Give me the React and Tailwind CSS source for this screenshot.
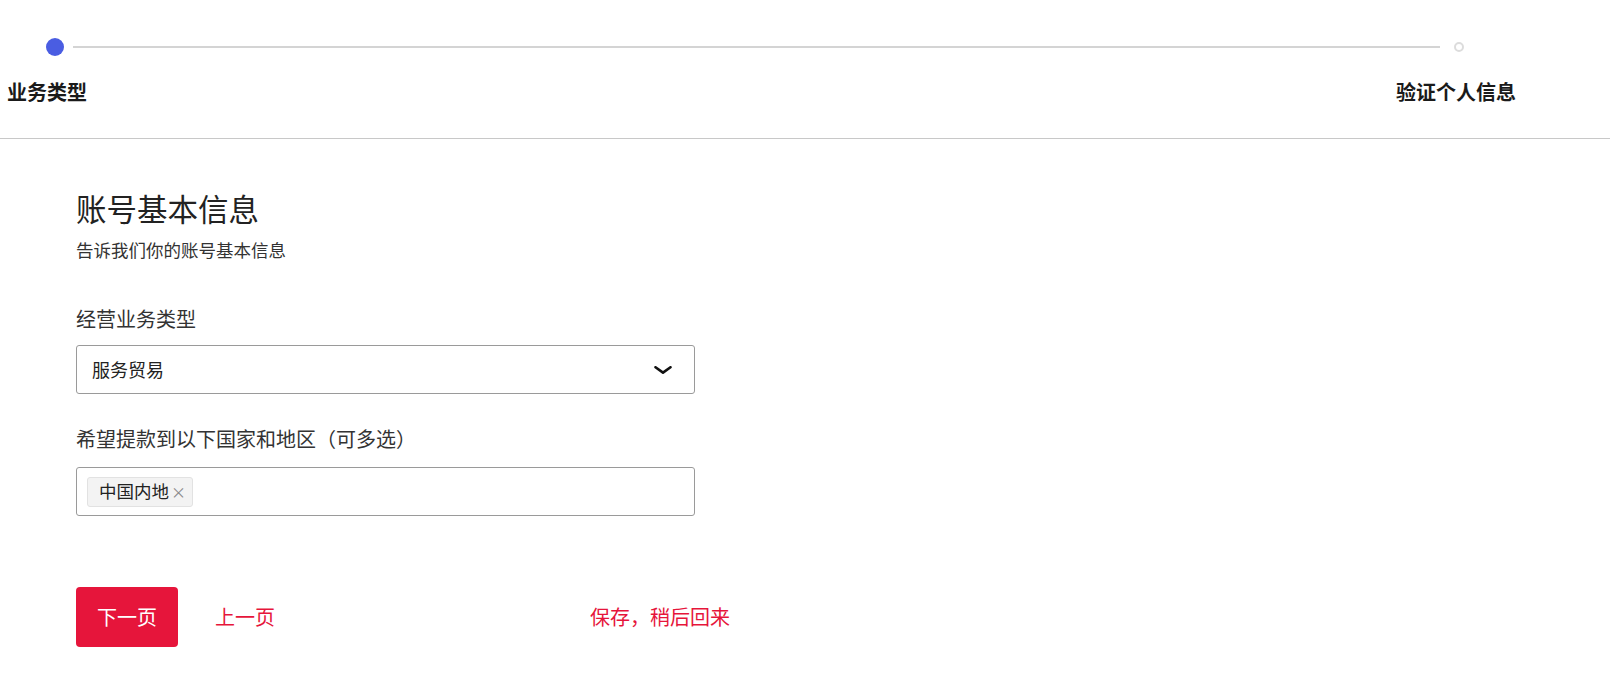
import React from "react";

export default function App() {
  const steps = ["业务类型", "验证个人信息"];

  return (
    <div className="min-h-screen bg-white text-[#222] font-['Noto_Sans_CJK_SC','Noto_Sans',sans-serif]">
      {/* Stepper */}
      <div className="h-[139px] border-b border-[#c8c8c8]">
        <div className="flex items-center pl-[46px] pr-[146px] pt-[38px]">
          <div className="w-[18px] h-[18px] rounded-full bg-[#4a5de2]" />
          <div className="flex-1 h-[2px] bg-[#d4d4d4] ml-[9px] mr-[14px]" />
          <div className="w-[10px] h-[10px] rounded-full border-2 border-[#dcdcdc]" />
        </div>
        <div className="flex justify-between pl-[7px] pr-[94px] mt-[22px]">
          {steps.map((s) => (
            <span key={s} className="text-[20px] leading-7 font-bold text-[#1a1a1a]">
              {s}
            </span>
          ))}
        </div>
      </div>

      {/* Form */}
      <div className="pl-[76px] pt-[49px]">
        <h1 className="text-[30.5px] leading-[40px] font-normal text-[#222]">账号基本信息</h1>
        <p className="mt-[9px] text-[17.5px] leading-[26px] text-[#333]">告诉我们你的账号基本信息</p>

        <label className="block mt-[42px] text-[20px] leading-7 text-[#333]">经营业务类型</label>
        <div className="mt-[12px] w-[619px] h-[49px] border border-[#9a9a9a] rounded-[3px] flex items-center justify-between pl-[15px] pr-[22px]">
          <span className="text-[18px] text-[#222]">服务贸易</span>
          <svg width="18" height="8" viewBox="0 0 18 8" fill="none">
            <path d="M1.5 1.2 L9 6.6 L16.5 1.2" stroke="#111" strokeWidth="2.6" strokeLinecap="round" strokeLinejoin="round" />
          </svg>
        </div>

        <label className="block mt-[31px] text-[20px] leading-7 text-[#333]">希望提款到以下国家和地区（可多选）</label>
        <div className="mt-[14px] w-[619px] h-[49px] border border-[#9a9a9a] rounded-[3px] flex items-center pl-[10px]">
          <span className="inline-flex items-center h-[30px] pl-[11px] pr-[6px] gap-[2px] bg-[#f3f3f3] border border-[#e2e2e2] rounded-[3px]">
            <span className="text-[17.5px] text-[#222]">中国内地</span>
            <span className="text-[15px] text-[#888] leading-none">×</span>
          </span>
        </div>

        <div className="mt-[71px] flex items-center">
          <button className="w-[102px] h-[60px] rounded-[4px] bg-[#e6153b] text-white text-[20px]">下一页</button>
          <button className="ml-[37px] text-[20px] text-[#e6153b]">上一页</button>
          <button className="ml-[315px] text-[20px] text-[#e6153b]">保存，稍后回来</button>
        </div>
      </div>
    </div>
  );
}
